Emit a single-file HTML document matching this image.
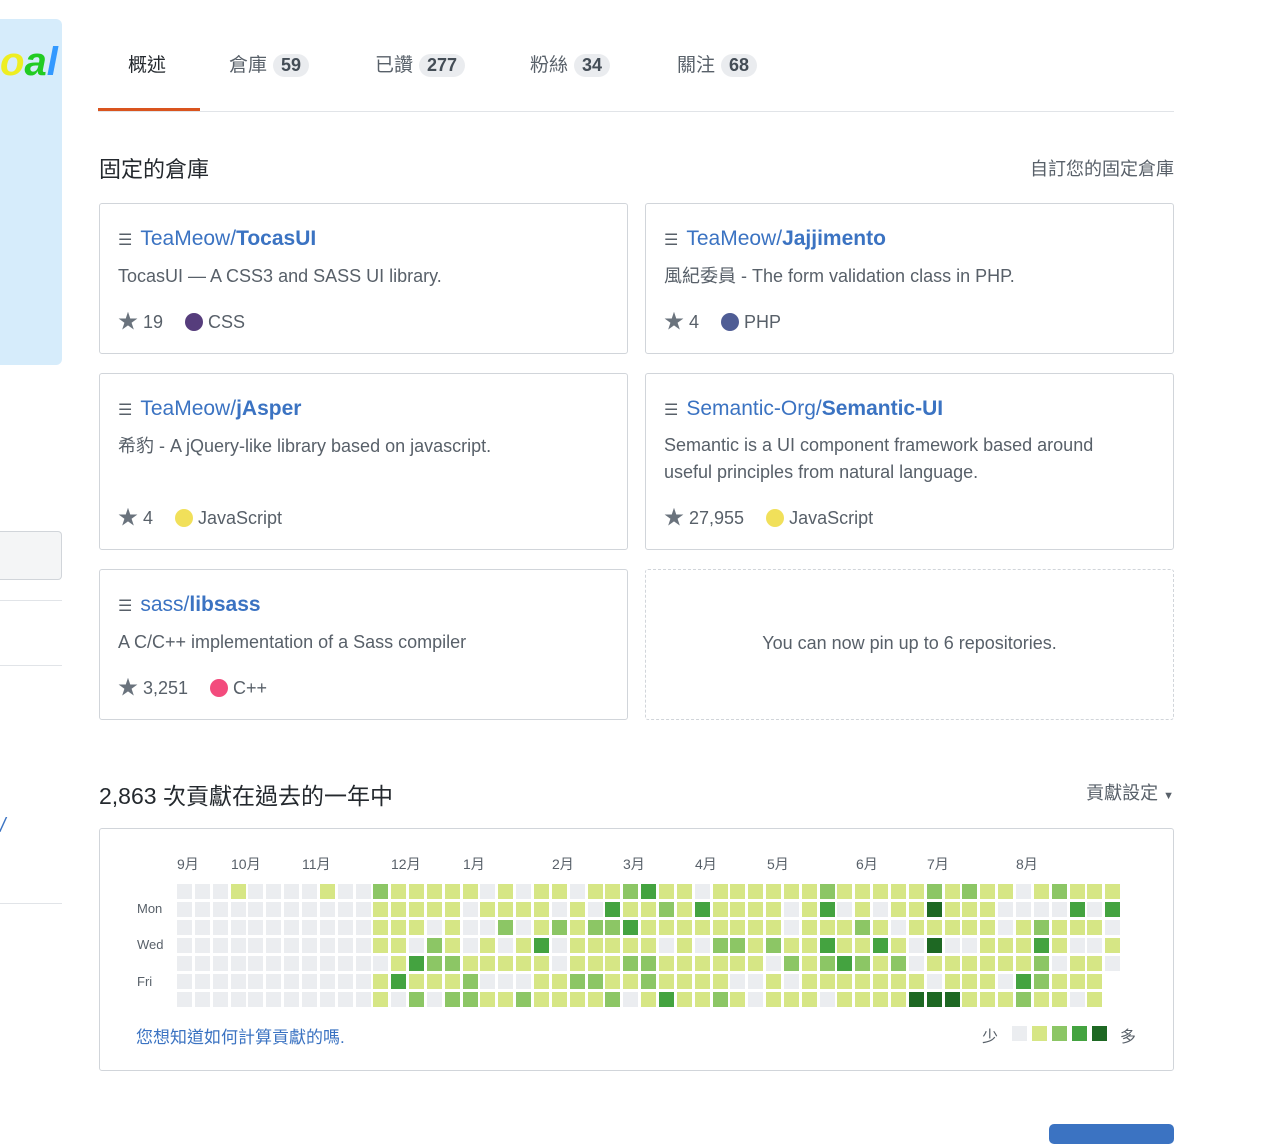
<!DOCTYPE html>
<html><head><meta charset="utf-8"><style>
body{margin:0;width:1280px;height:1132px;overflow:hidden;background:#fff;font-family:"Liberation Sans","Noto Sans CJK TC",sans-serif;color:#24292e;position:relative}
.a{position:absolute}
.tab{position:absolute;top:50px;font-size:19px;color:#586069}
.cnt{display:inline-block;background:#eaecef;border-radius:12px;padding:1px 8px;font-size:18px;font-weight:bold;color:#444d56;margin-left:6px}
.card{position:absolute;border:1px solid #d1d5da;border-radius:3px;box-sizing:border-box;width:529px}
.card .t{position:absolute;left:18px;top:23px;font-size:21px;color:#3b73c2}
.card .t span.i{color:#586069;font-size:16px;margin-right:8px}
.card .d{position:absolute;left:18px;font-size:18px;color:#586069;line-height:27px}
.card .m{position:absolute;left:18px;font-size:18px;color:#586069}
.dot{display:inline-block;width:18px;height:18px;border-radius:50%;vertical-align:-3px;margin:0 5px 0 22px}
.star{color:#6a737d;font-size:20px}
.c{position:absolute;width:15px;height:15px}
.ml{position:absolute;top:854px;font-size:14px;color:#586069}
.dl{position:absolute;left:137px;font-size:13px;color:#586069}
</style></head><body>
<div class="a" style="left:0;top:19px;width:62px;height:346px;background:#d6ecfb;border-radius:0 6px 6px 0"></div>
<div class="a" style="left:0;top:40px;font:italic bold 40px 'Liberation Sans';color:#2c2"><span style="color:#ee2">o</span>a<span style="color:#39f">l</span></div>
<div class="a" style="left:0;top:531px;width:62px;height:49px;border:1px solid #d1d5da;border-left:none;border-radius:0 4px 4px 0;background:#f4f5f6;box-sizing:border-box"></div>
<div class="a" style="left:0;top:600px;width:62px;height:1px;background:#e1e4e8"></div>
<div class="a" style="left:0;top:665px;width:62px;height:1px;background:#e1e4e8"></div>
<div class="a" style="left:0;top:903px;width:62px;height:1px;background:#e1e4e8"></div>
<div class="a" style="left:0;top:815px;color:#3b73c2;font-size:20px;font-style:italic">/</div>

<div class="tab" style="left:128px;color:#24292e">概述</div>
<div class="tab" style="left:229px">倉庫<span class="cnt">59</span></div>
<div class="tab" style="left:375px">已讚<span class="cnt">277</span></div>
<div class="tab" style="left:530px">粉絲<span class="cnt">34</span></div>
<div class="tab" style="left:677px">關注<span class="cnt">68</span></div>
<div class="a" style="left:98px;top:111px;width:1076px;height:1px;background:#e1e4e8"></div>
<div class="a" style="left:98px;top:108px;width:102px;height:3px;background:#d9541e"></div>

<div class="a" style="left:99px;top:152px;font-size:22px">固定的倉庫</div>
<div class="a" style="right:106px;top:155px;font-size:18px;color:#586069">自訂您的固定倉庫</div>

<div class="card" style="left:99px;top:203px;height:151px"><div class="t"><span class="i">☰</span>TeaMeow/<b>TocasUI</b></div><div class="d" style="top:59px">TocasUI — A CSS3 and SASS UI library.</div><div class="m" style="top:101px"><span class="star">★</span> 19<span class="dot" style="background:#563d7c"></span>CSS</div></div>
<div class="card" style="left:645px;top:203px;height:151px"><div class="t"><span class="i">☰</span>TeaMeow/<b>Jajjimento</b></div><div class="d" style="top:59px">風紀委員 - The form validation class in PHP.</div><div class="m" style="top:101px"><span class="star">★</span> 4<span class="dot" style="background:#4F5D95"></span>PHP</div></div>
<div class="card" style="left:99px;top:373px;height:177px"><div class="t"><span class="i">☰</span>TeaMeow/<b>jAsper</b></div><div class="d" style="top:59px">希豹 - A jQuery-like library based on javascript.</div><div class="m" style="top:127px"><span class="star">★</span> 4<span class="dot" style="background:#f1e05a"></span>JavaScript</div></div>
<div class="card" style="left:645px;top:373px;height:177px"><div class="t"><span class="i">☰</span>Semantic-Org/<b>Semantic-UI</b></div><div class="d" style="top:58px">Semantic is a UI component framework based around<br>useful principles from natural language.</div><div class="m" style="top:127px"><span class="star">★</span> 27,955<span class="dot" style="background:#f1e05a"></span>JavaScript</div></div>
<div class="card" style="left:99px;top:569px;height:151px"><div class="t"><span class="i">☰</span>sass/<b>libsass</b></div><div class="d" style="top:59px">A C/C++ implementation of a Sass compiler</div><div class="m" style="top:101px"><span class="star">★</span> 3,251<span class="dot" style="background:#f34b7d"></span>C++</div></div>
<div class="card" style="left:645px;top:569px;height:151px;border:1px dashed #d1d5da"><div class="d" style="top:60px;left:0;width:527px;text-align:center">You can now pin up to 6 repositories.</div></div>

<div class="a" style="left:99px;top:777px;font-size:23px">2,863 次貢獻在過去的一年中</div>
<div class="a" style="right:106px;top:779px;font-size:18px;color:#586069">貢獻設定 <span style="font-size:11px">▼</span></div>
<div class="card" style="left:99px;top:828px;width:1075px;height:243px"></div>
<div id="g"></div>
<div class="ml" style="left:177px">9月</div><div class="ml" style="left:231px">10月</div><div class="ml" style="left:302px">11月</div><div class="ml" style="left:391px">12月</div><div class="ml" style="left:463px">1月</div><div class="ml" style="left:552px">2月</div><div class="ml" style="left:623px">3月</div><div class="ml" style="left:695px">4月</div><div class="ml" style="left:767px">5月</div><div class="ml" style="left:856px">6月</div><div class="ml" style="left:927px">7月</div><div class="ml" style="left:1016px">8月</div>
<div class="dl" style="top:901px">Mon</div><div class="dl" style="top:937px">Wed</div><div class="dl" style="top:974px">Fri</div>
<div class="a" style="left:136px;top:1023px;font-size:17px;color:#3b73c2">您想知道如何計算貢獻的嗎.</div>
<div class="a" style="left:982px;top:1023px;font-size:16px;color:#586069">少</div>
<div class="a" style="left:1012px;top:1026px;width:15px;height:15px;background:#ebedf0"></div>
<div class="a" style="left:1032px;top:1026px;width:15px;height:15px;background:#d6e685"></div>
<div class="a" style="left:1052px;top:1026px;width:15px;height:15px;background:#8cc665"></div>
<div class="a" style="left:1072px;top:1026px;width:15px;height:15px;background:#44a340"></div>
<div class="a" style="left:1092px;top:1026px;width:15px;height:15px;background:#1e6823"></div>
<div class="a" style="left:1120px;top:1023px;font-size:16px;color:#586069">多</div>
<div class="a" style="left:1049px;top:1124px;width:125px;height:20px;background:#3b73c2;border-radius:5px"></div>
<script>
var cols=['#ebedf0','#d6e685','#8cc665','#44a340','#1e6823'];var h='';var s=7;
function r(){s=(s*9301+49297)%233280;return s/233280;}
for(var c=0;c<53;c++)for(var d=0;d<7;d++){if(c==52&&d>4)continue;var v=r(),l;
if(c<11){l=v<0.07?1:0;}else{l=v<0.15?0:v<0.75?1:v<0.93?2:3;if(c>=41&&c<=45&&v>0.85)l=4;}
h+='<div class="c" style="left:'+Math.round(177+c*17.85)+'px;top:'+(884+d*18)+'px;background:'+cols[l]+'"></div>';}
document.getElementById('g').innerHTML=h;
</script>
</body></html>
